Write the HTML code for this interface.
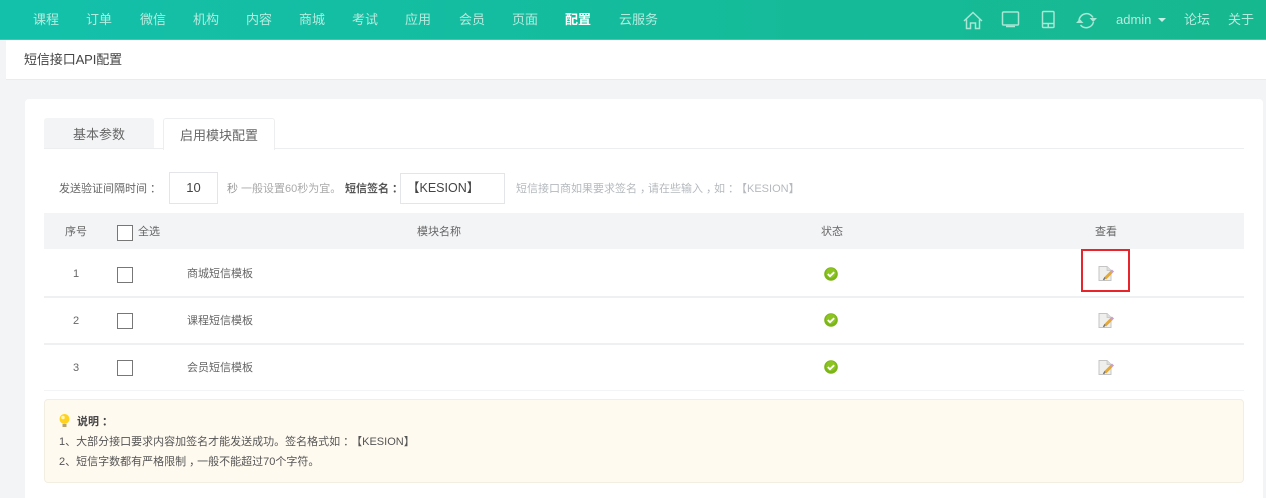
<!DOCTYPE html>
<html><head><meta charset="utf-8"><style>
html,body{margin:0;padding:0;width:1266px;height:498px;overflow:hidden;background:#f3f4f6}
body{position:relative;font-family:"Liberation Sans","Noto Sans CJK SC",sans-serif;color:#555;text-spacing-trim:space-all;font-feature-settings:"palt" 0}
.t{position:absolute;white-space:nowrap;line-height:16px}
.b{position:absolute;box-sizing:border-box}
.n{position:absolute;top:12px;font-size:13px;line-height:16px;color:#b5ebdf;white-space:nowrap}
.c{position:absolute;width:16px;height:16px;box-sizing:border-box;border:1px solid #777;background:#fff;left:117px}
.s{font-size:11px;color:#666}
.p{position:relative;left:3px}
svg{position:absolute;overflow:visible}
</style></head><body>
<div class="b" style="left:0;top:0;width:1266px;height:40px;background:linear-gradient(90deg,#13c0aa,#16b88f);border-bottom:1px solid #3fc9ae"></div>
<div class="n" style="left:33px">课程</div><div class="n" style="left:86px">订单</div><div class="n" style="left:140px">微信</div><div class="n" style="left:193px">机构</div><div class="n" style="left:246px">内容</div><div class="n" style="left:299px">商城</div><div class="n" style="left:352px">考试</div><div class="n" style="left:405px">应用</div><div class="n" style="left:459px">会员</div><div class="n" style="left:512px">页面</div><div class="n" style="left:565px;color:#fff;font-weight:bold">配置</div><div class="n" style="left:619px">云服务</div>
<svg style="left:0;top:0" width="1266" height="40" fill="none" stroke="#a8e6d6" stroke-width="1.500">
<path d="M964 21L973 12.500L982 21M966.500 19.500V28.500H970.500V23H975.500V28.500H979.500V19.500"/>
<rect x="1002.500" y="12" width="16" height="13" rx="1"/><path d="M1006 26.500H1015"/>
<rect x="1042.500" y="11.500" width="11.500" height="16" rx="1"/><path d="M1042.500 23.500H1054M1048.250 23.500V27.500"/>
<path d="M1079 20.500A7.500 7.500 0 0 1 1093 17.500M1093.500 22A7.500 7.500 0 0 1 1080.500 25"/>
<path d="M1089.500 18H1097L1093.250 22Z M1076 23H1083.500L1079.750 19Z" fill="#a8e6d6" stroke="none"/>
</svg>
<div class="n" style="left:1116px;color:#b5ebdf">admin</div>
<div class="b" style="left:1158px;top:18px;border-left:4px solid transparent;border-right:4px solid transparent;border-top:4px solid #c8f0e6"></div>
<div class="n" style="left:1184px">论坛</div><div class="n" style="left:1228px">关于</div>

<div class="b" style="left:6px;top:40px;width:1260px;height:40px;background:#fff;border-bottom:1px solid #e9ebee"></div>
<div class="t" style="left:24px;top:52px;font-size:13px;color:#444;letter-spacing:-.1px">短信接口API配置</div>

<div class="b" style="left:25px;top:99px;width:1238px;height:399px;background:#fff;border-radius:4px 4px 0 0"></div>

<div class="b" style="left:44px;top:118px;width:110px;height:31px;background:#f3f4f6;border-radius:3px 3px 0 0"></div>
<div class="t" style="left:73px;top:127px;font-size:13px;color:#666">基本参数</div>
<div class="b" style="left:44px;top:148px;width:1200px;height:1px;background:#eceef0"></div>
<div class="b" style="left:163px;top:118px;width:112px;height:32px;background:#fff;border:1px solid #eceef0;border-bottom:0;border-radius:3px 3px 0 0"></div>
<div class="t" style="left:180px;top:128px;font-size:13px;color:#666">启用模块配置</div>

<div class="t" style="left:59px;top:181px;font-size:11px;color:#666">发送验证间隔时间<span class="p">：</span></div>
<div class="b" style="left:169px;top:172px;width:49px;height:32px;border:1px solid #e3e5e8;text-align:center;font-size:13px;line-height:30px;color:#444">10</div>
<div class="t" style="left:227px;top:181px;font-size:11px;color:#aaa"><span style="color:#999">秒</span> 一般设置60秒为宜。</div>
<div class="t" style="left:345px;top:181px;font-size:11px;font-weight:bold;color:#555">短信签名<span class="p">：</span></div>
<div class="b" style="left:400px;top:173px;width:105px;height:31px;border:1px solid #e3e5e8;font-size:12.500px;line-height:29px;color:#444;padding-left:6px;white-space:nowrap">【KESION】</div>
<div class="t" style="left:516px;top:181px;font-size:11px;color:#b5b9be">短信接口商如果要求签名<span class="p">，</span>请在些输入<span class="p">，</span>如<span class="p">：</span>【KESION】</div>

<div class="b" style="left:44px;top:213px;width:1200px;height:36px;background:#f3f4f6"></div>
<div class="t s" style="left:65px;top:224px">序号</div>
<div class="c" style="top:225px"></div>
<div class="t s" style="left:138px;top:224px">全选</div>
<div class="t s" style="left:417px;top:224px">模块名称</div>
<div class="t s" style="left:821px;top:224px">状态</div>
<div class="t s" style="left:1095px;top:224px">查看</div>

<div class="b" style="left:44px;top:296px;width:1200px;height:2px;background:#eef0f2"></div>
<div class="b" style="left:44px;top:343px;width:1200px;height:2px;background:#eef0f2"></div>
<div class="b" style="left:44px;top:390px;width:1200px;height:1px;background:#f3f4f6"></div>

<div class="t s" style="left:73px;top:266px">1</div><div class="c" style="top:267px"></div><div class="t s" style="left:187px;top:266px">商城短信模板</div>
<div class="t s" style="left:73px;top:313px">2</div><div class="c" style="top:313px"></div><div class="t s" style="left:187px;top:313px">课程短信模板</div>
<div class="t s" style="left:73px;top:360px">3</div><div class="c" style="top:360px"></div><div class="t s" style="left:187px;top:360px">会员短信模板</div>

<svg style="left:0;top:0" width="1266" height="498">
<defs><g id="ok"><circle cx="0" cy="0" r="6.800" fill="#7cb518"/><circle cx="0" cy="-1" r="5" fill="#8cc422"/><path d="M-3.200 0L-1 2.200L3.200-1.800" fill="none" stroke="#fff" stroke-width="1.800"/></g>
<g id="ed"><path d="M0 0H8L12 4V14H0Z" fill="#efefed" stroke="#c4c4c4" stroke-width="1"/><path d="M8 0V4H12" fill="#ddd" stroke="#c4c4c4" stroke-width=".7"/><path d="M6 12L12.500 5.500" stroke="#e3a838" stroke-width="3"/><path d="M12 6L14 4" stroke="#c9a0c4" stroke-width="3"/><path d="M4.500 13.500L6 11" stroke="#777" stroke-width="1.500"/></g></defs>
<use href="#ok" x="831" y="274"/><use href="#ok" x="831" y="320"/><use href="#ok" x="831" y="367"/>
<use href="#ed" x="1099" y="266.500"/><use href="#ed" x="1099" y="313.500"/><use href="#ed" x="1099" y="360.500"/>
<rect x="1082" y="250" width="47" height="41" fill="none" stroke="#e8252b" stroke-width="2"/>
</svg>

<div class="b" style="left:44px;top:399px;width:1200px;height:84px;background:#fffaf0;border:1px solid #f3eee2;border-radius:4px"></div>
<svg style="left:0;top:0" width="100" height="498"><circle cx="64.500" cy="419" r="5" fill="#ffd21f"/><circle cx="63" cy="417.500" r="1.800" fill="#fff6b0"/><rect x="62.500" y="424" width="4" height="3" fill="#b9a56a"/></svg>
<div class="t" style="left:77px;top:414px;font-size:11px;font-weight:bold;color:#444">说明<span class="p">：</span></div>
<div class="t" style="left:59px;top:434px;font-size:11px;color:#555">1、大部分接口要求内容加签名才能发送成功。签名格式如<span class="p">：</span>【KESION】</div>
<div class="t" style="left:59px;top:454px;font-size:11px;color:#555">2、短信字数都有严格限制<span class="p">，</span>一般不能超过70个字符。</div>
</body></html>
